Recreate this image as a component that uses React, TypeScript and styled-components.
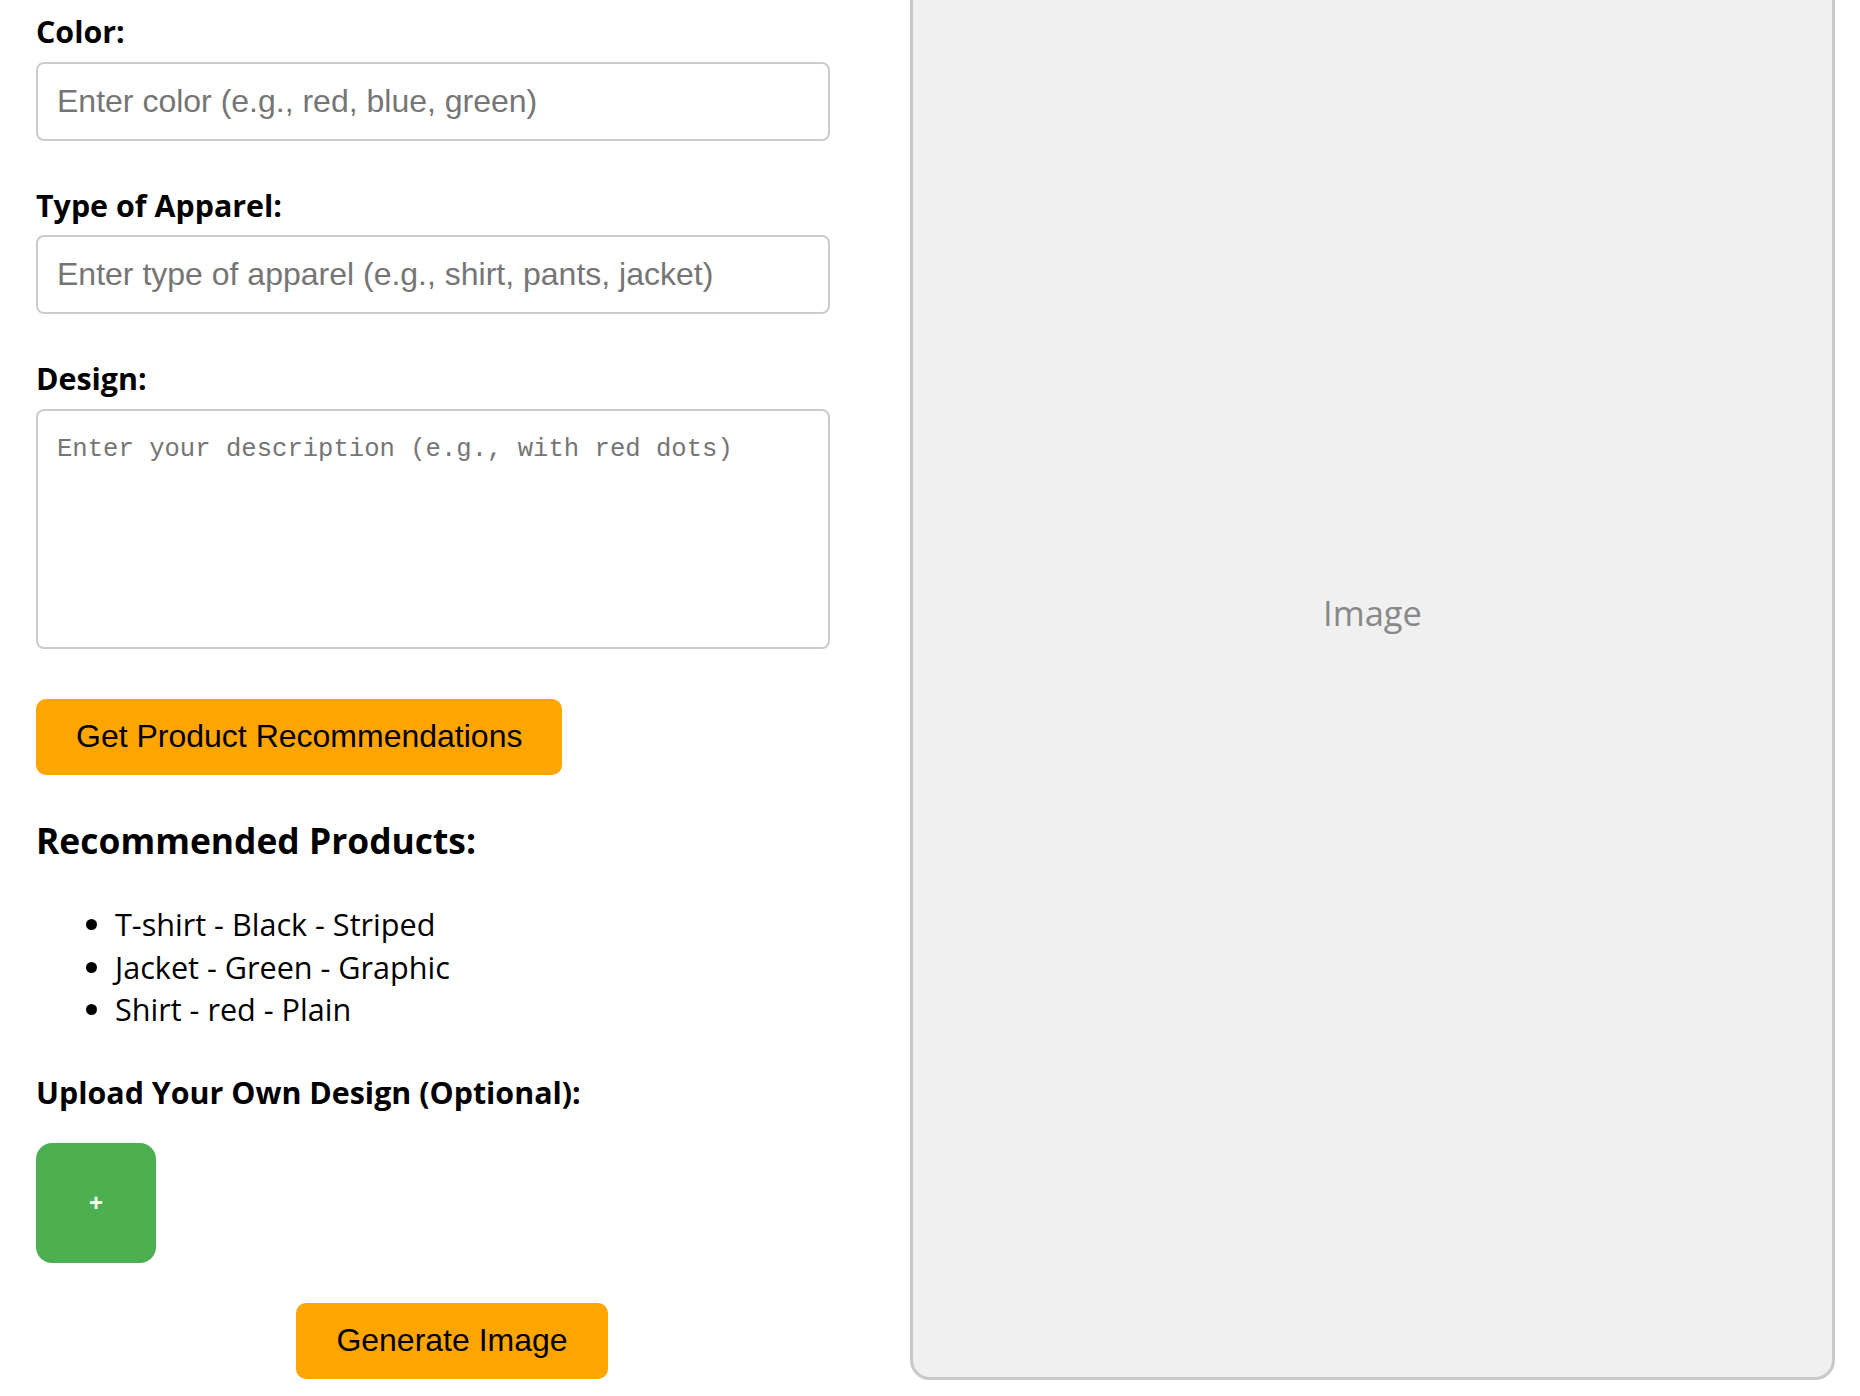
import React from "react";
import styled, { createGlobalStyle } from "styled-components";

const GlobalStyle = createGlobalStyle`
  html, body {
    margin: 0;
    padding: 0;
    background: #ffffff;
    overflow: hidden;
  }
  * { box-sizing: border-box; }
`;

const Page = styled.div`
  display: flex;
  align-items: stretch;
  padding: 11px 0 0 36px;
  width: 1860px;
  height: 1396px;
  overflow: hidden;
`;

const FormColumn = styled.div`
  width: 832px;
  flex-shrink: 0;
  display: flex;
  flex-direction: column;
  align-items: flex-start;
  align-self: flex-start;
`;

const FieldGroup = styled.div<{ $gap: number }>`
  display: flex;
  flex-direction: column;
  margin-bottom: ${(p) => p.$gap}px;
`;

const Label = styled.label`
  display: block;
  font-family: "Open Sans", "Noto Sans", sans-serif;
  font-weight: 700;
  font-size: 30.4px;
  line-height: 42.6px;
  color: #000;
  margin-bottom: 8px;
`;

const TextInput = styled.input`
  width: 794px;
  height: 79px;
  border: 2px solid #cccccc;
  border-radius: 8px;
  padding: 0 19px;
  font-family: "Liberation Sans", Arial, sans-serif;
  font-size: 32px;
  color: #000;
  background: #fff;
  outline: none;
  &::placeholder { color: #757575; }
`;

const TextArea = styled.textarea`
  display: block;
  width: 794px;
  height: 240px;
  border: 2px solid #cccccc;
  border-radius: 8px;
  padding: 22px 19px 19px;
  font-family: "Liberation Mono", "DejaVu Sans Mono", monospace;
  font-size: 25.6px;
  line-height: 34px;
  color: #000;
  background: #fff;
  resize: none;
  outline: none;
  &::placeholder { color: #757575; }
`;

const ActionButton = styled.button`
  height: 76px;
  padding: 0 40px;
  border: none;
  border-radius: 10px;
  background: #ffa500;
  color: #000;
  font-family: "Liberation Sans", Arial, sans-serif;
  font-size: 32px;
  cursor: pointer;
`;

const SectionHeading = styled.h3`
  margin: 40px 0 38px;
  font-family: "Open Sans", "Noto Sans", sans-serif;
  font-weight: 700;
  font-size: 35.4px;
  line-height: 50px;
  color: #000;
`;

const ProductList = styled.ul`
  margin: 0 0 41px;
  padding-left: 79px;
  font-family: "Open Sans", "Noto Sans", sans-serif;
  font-size: 30.6px;
  line-height: 42.8px;
  color: #000;
`;

const UploadLabel = styled(Label)`
  margin-bottom: 28px;
`;

const UploadBox = styled.div`
  width: 120px;
  height: 120px;
  border-radius: 16px;
  background: #4caf50;
  color: #fff;
  display: flex;
  align-items: center;
  justify-content: center;
  font-family: "Liberation Sans", Arial, sans-serif;
  font-weight: 700;
  font-size: 24px;
  cursor: pointer;
`;

const ButtonRow = styled.div`
  width: 832px;
  margin-top: 40px;
  display: flex;
  justify-content: center;
`;

const PreviewPanel = styled.div`
  width: 925px;
  margin: -167px 0 16px 42px;
  border: 3px solid #c8c8c8;
  border-radius: 20px;
  background: #f0f0f0;
  display: flex;
  align-items: center;
  justify-content: center;
`;

const PreviewText = styled.span`
  font-family: "Open Sans", "Noto Sans", sans-serif;
  font-size: 34.5px;
  color: #888888;
`;

const products = [
  "T-shirt - Black - Striped",
  "Jacket - Green - Graphic",
  "Shirt - red - Plain",
];

export default function App() {
  return (
    <>
      <GlobalStyle />
      <Page>
        <FormColumn>
          <FieldGroup $gap={44}>
            <Label>Color:</Label>
            <TextInput placeholder="Enter color (e.g., red, blue, green)" />
          </FieldGroup>
          <FieldGroup $gap={44}>
            <Label>Type of Apparel:</Label>
            <TextInput placeholder="Enter type of apparel (e.g., shirt, pants, jacket)" />
          </FieldGroup>
          <FieldGroup $gap={50}>
            <Label>Design:</Label>
            <TextArea placeholder="Enter your description (e.g., with red dots)" />
          </FieldGroup>
          <ActionButton>Get Product Recommendations</ActionButton>
          <SectionHeading>Recommended Products:</SectionHeading>
          <ProductList>
            {products.map((p) => (
              <li key={p}>{p}</li>
            ))}
          </ProductList>
          <UploadLabel>Upload Your Own Design (Optional):</UploadLabel>
          <UploadBox>+</UploadBox>
          <ButtonRow>
            <ActionButton>Generate Image</ActionButton>
          </ButtonRow>
        </FormColumn>
        <PreviewPanel>
          <PreviewText>Image</PreviewText>
        </PreviewPanel>
      </Page>
    </>
  );
}
